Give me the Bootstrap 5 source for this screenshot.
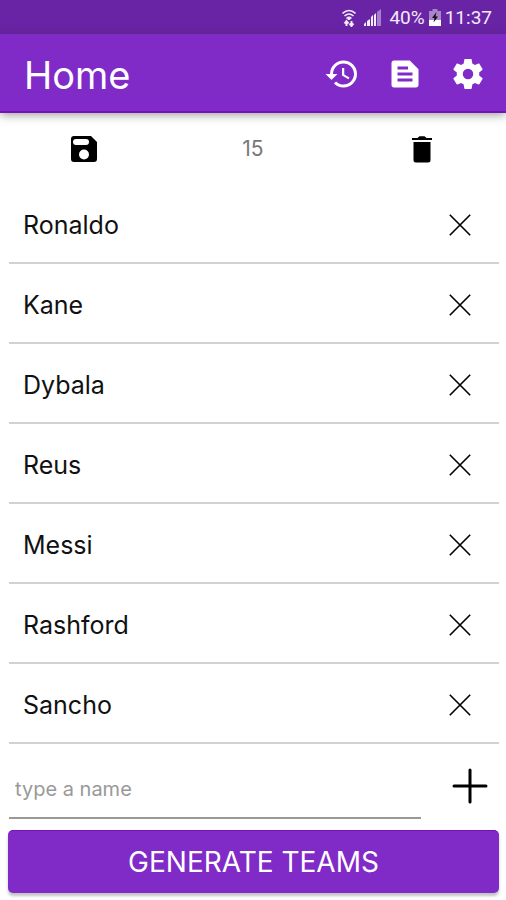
<!DOCTYPE html>
<html lang="en">
<head>
<meta charset="utf-8">
<meta name="viewport" content="width=device-width, initial-scale=1">
<title>Home</title>
<link rel="stylesheet" href="https://cdn.jsdelivr.net/npm/bootstrap@5.3.0/dist/css/bootstrap.min.css">
<style>
  body { font-family: Inter, "Noto Sans", sans-serif; color: #111; background: #fff; }
  svg { display: block; }
  .status-bar { background: #6924a6; font: 19px/34px Roboto, sans-serif; color: #f3eafa; padding: 1px 14px 0 0; height: 34px; }
  .app-bar { background: #802ac8; height: 79px; padding: 2px 20px 0 24px; border-bottom: 2px solid #7412b8; box-shadow: 0 2px 9px rgba(40, 45, 35, .45); }
  .app-title { font-size: 38px; line-height: 48px; font-weight: 400; padding-top: 2px; }
  .app-actions { gap: 27px; }
  .tool-row { height: 71px; }
  .player-count { font-size: 21px; color: #777; }
  .player-list { padding: 0 7px 0 9px; }
  .player { height: 80px; padding: 3px 24px 0 14px; border-bottom: 2px solid #d2d2d2; font-size: 25px; }
  .player span { padding-top: 2px; }
  .icon-btn { color: #000; }
  .add-row { height: 75px; padding: 0 10px 0 9px; gap: 23px; }
  .name-field { border-bottom: 2px solid #999; font-size: 20px; color: #111; padding: 16px 6px 0; }
  .name-field::placeholder { color: #999; opacity: 1; }
  .generate-wrap { padding: 11px 7px 6px 8px; }
  .generate-btn, .generate-btn:hover { background: #802ac8; color: #fff; height: 63px; font-size: 28px; border: 0; border-top: 1px solid #7412b8; border-radius: 5px; box-shadow: 0 3px 3px rgba(0, 0, 0, .24); }
</style>
<script src="https://cdn.jsdelivr.net/npm/bootstrap@5.3.0/dist/js/bootstrap.bundle.min.js" defer></script>
</head>
<body>
<div class="d-flex flex-column min-vh-100">
  <div class="status-bar d-flex align-items-center justify-content-end">
    <svg class="me-2" width="14" height="18" viewBox="0 0 14 18" fill="none" stroke="#f3eafa" aria-hidden="true">
      <path d="M.5 4.500Q7-1.500 13.500 4.500M2.500 7Q7 3 11.500 7M4.500 9.500Q7 7.300 9.500 9.500" stroke-width="1.600"/>
      <path d="M7 8v3" stroke-width="2.500"/>
      <path d="M4.500 17v-5M2.500 14.500l2-2.500 2 2.500M9.500 12v5M7.500 14.500l2 2.500 2-2.500" stroke-width="2"/>
    </svg>
    <svg class="me-2" width="17" height="17" viewBox="0 0 17 17" fill="#f3eafa" aria-hidden="true">
      <path d="M0 17v-2l2-2v4zM3 17v-5l3-2v7zM7 17V8l2-2v11zM10 17V6l2-2v13z"/>
      <path d="M13 17V3l4-3v17z" opacity=".45"/>
    </svg>
    <span class="me-1">40%</span>
    <svg class="me-1" width="12" height="17" viewBox="0 0 12 17" aria-hidden="true">
      <path d="M3.500 0h5v2H12v15H0V2h3.500z" fill="#a884c9"/>
      <path d="M0 11h12v6H0z" fill="#fff"/>
      <path d="M7.500 3L3 9h2.500L4.500 13.500 9 7.500H6.500z" fill="#16091f"/>
    </svg>
    <span>11:37</span>
  </div>

  <header class="app-bar d-flex align-items-center justify-content-between text-white">
    <h1 class="app-title m-0">Home</h1>
    <div class="app-actions d-flex">
      <button type="button" class="btn p-0 border-0 text-white" aria-label="History">
        <svg width="36" height="36" viewBox="0 0 24 24" fill="currentColor"><path d="M13 3a9 9 0 0 0-9 9H1l3.890 3.890.070.140L9 12H6c0-3.870 3.130-7 7-7s7 3.130 7 7-3.130 7-7 7c-1.930 0-3.680-.790-4.940-2.060l-1.420 1.420A8.950 8.950 0 0 0 13 21a9 9 0 0 0 0-18zm-1 5v5l4.280 2.540.720-1.210-3.500-2.080V8H12z"/></svg>
      </button>
      <button type="button" class="btn p-0 border-0 text-white" aria-label="Saved lists">
        <svg width="36" height="36" viewBox="0 0 24 24" fill="currentColor" fill-rule="evenodd"><path d="M15.200 3H4.600C3.700 3 3 3.700 3 4.600v14.800c0 .9.700 1.600 1.600 1.600h14.800c.9 0 1.600-.7 1.600-1.600V8.800zM7 7h7v2H7zm0 4h10v2H7zm0 4h10v2H7z"/></svg>
      </button>
      <button type="button" class="btn p-0 border-0 text-white" aria-label="Settings">
        <svg width="36" height="36" viewBox="0 0 24 24" fill="currentColor"><path d="M19.430 12.980c.040-.320.070-.640.070-.980s-.030-.660-.070-.980l2.110-1.650c.190-.150.240-.420.120-.640l-2-3.460c-.120-.220-.390-.300-.610-.220l-2.490 1c-.520-.400-1.080-.730-1.690-.980l-.380-2.650A.49.49 0 0 0 14 2h-4c-.250 0-.460.180-.490.420l-.380 2.650c-.610.250-1.170.590-1.690.980l-2.490-1c-.230-.090-.490 0-.610.220l-2 3.460c-.130.220-.070.490.120.640l2.110 1.650c-.040.320-.070.650-.070.980s.030.660.070.980l-2.110 1.650c-.190.150-.240.420-.120.640l2 3.460c.120.220.390.300.610.220l2.490-1c.520.400 1.080.730 1.690.980l.380 2.650c.030.240.240.420.490.420h4c.250 0 .460-.180.490-.420l.380-2.650c.610-.250 1.170-.590 1.690-.980l2.490 1c.230.090.490 0 .610-.220l2-3.460c.120-.220.070-.490-.120-.640zM12 15.500a3.500 3.500 0 1 1 0-7 3.500 3.500 0 0 1 0 7z"/></svg>
      </button>
    </div>
  </header>

  <main class="flex-grow-1">
    <div class="tool-row row g-0 align-items-center text-center">
      <div class="col-4 d-flex justify-content-center">
        <button type="button" class="btn icon-btn p-0 border-0" aria-label="Save list">
          <svg width="28" height="28" viewBox="0 0 28 28" fill="currentColor" fill-rule="evenodd"><path d="M4 1h17l6 6v17a3 3 0 0 1-3 3H4a3 3 0 0 1-3-3V4a3 3 0 0 1 3-3zM6 4a3 3 0 0 0 0 6h10a3 3 0 0 0 0-6zM14 14.500a5 5 0 1 0 0 10 5 5 0 0 0 0-10z"/></svg>
        </button>
      </div>
      <div class="col-4 player-count">15</div>
      <div class="col-4 d-flex justify-content-center">
        <button type="button" class="btn icon-btn p-0 border-0" aria-label="Delete all">
          <svg width="22" height="28" viewBox="0 0 22 28" fill="currentColor"><path d="M1 5V3h5.500L8.500 1.200h5L15.500 3H21v2zM2.500 7h17v18a2.500 2.500 0 0 1-2.500 2.500H5A2.500 2.500 0 0 1 2.500 25z"/></svg>
        </button>
      </div>
    </div>

    <svg class="d-none" aria-hidden="true"><symbol id="cross" viewBox="0 0 22 22"><path d="M.8.8l20.400 20.400M21.200.8L.8 21.200" fill="none" stroke="currentColor" stroke-width="1.600"/></symbol></svg>

    <ul class="player-list list-unstyled m-0">
      <li class="player d-flex align-items-center justify-content-between"><span>Ronaldo</span><button type="button" class="btn icon-btn p-1 border-0" aria-label="Remove Ronaldo"><svg width="22" height="22"><use href="#cross"/></svg></button></li>
      <li class="player d-flex align-items-center justify-content-between"><span>Kane</span><button type="button" class="btn icon-btn p-1 border-0" aria-label="Remove Kane"><svg width="22" height="22"><use href="#cross"/></svg></button></li>
      <li class="player d-flex align-items-center justify-content-between"><span>Dybala</span><button type="button" class="btn icon-btn p-1 border-0" aria-label="Remove Dybala"><svg width="22" height="22"><use href="#cross"/></svg></button></li>
      <li class="player d-flex align-items-center justify-content-between"><span>Reus</span><button type="button" class="btn icon-btn p-1 border-0" aria-label="Remove Reus"><svg width="22" height="22"><use href="#cross"/></svg></button></li>
      <li class="player d-flex align-items-center justify-content-between"><span>Messi</span><button type="button" class="btn icon-btn p-1 border-0" aria-label="Remove Messi"><svg width="22" height="22"><use href="#cross"/></svg></button></li>
      <li class="player d-flex align-items-center justify-content-between"><span>Rashford</span><button type="button" class="btn icon-btn p-1 border-0" aria-label="Remove Rashford"><svg width="22" height="22"><use href="#cross"/></svg></button></li>
      <li class="player d-flex align-items-center justify-content-between"><span>Sancho</span><button type="button" class="btn icon-btn p-1 border-0" aria-label="Remove Sancho"><svg width="22" height="22"><use href="#cross"/></svg></button></li>
    </ul>

    <form>
      <div class="add-row d-flex align-items-stretch">
        <input type="text" class="name-field flex-grow-1 border-top-0 border-start-0 border-end-0 bg-transparent w-100" placeholder="type a name" aria-label="Player name">
        <button type="button" class="btn icon-btn p-2 pt-3 px-1 ms-1 me-1 border-0" aria-label="Add player">
          <svg width="36" height="36" viewBox="0 0 36 36"><path d="M18 2v32M2 18h32" fill="none" stroke="currentColor" stroke-width="3" stroke-linecap="round"/></svg>
        </button>
      </div>
      <div class="generate-wrap">
        <button type="button" class="btn generate-btn w-100 p-0">GENERATE TEAMS</button>
      </div>
    </form>
  </main>
</div>
</body>
</html>
